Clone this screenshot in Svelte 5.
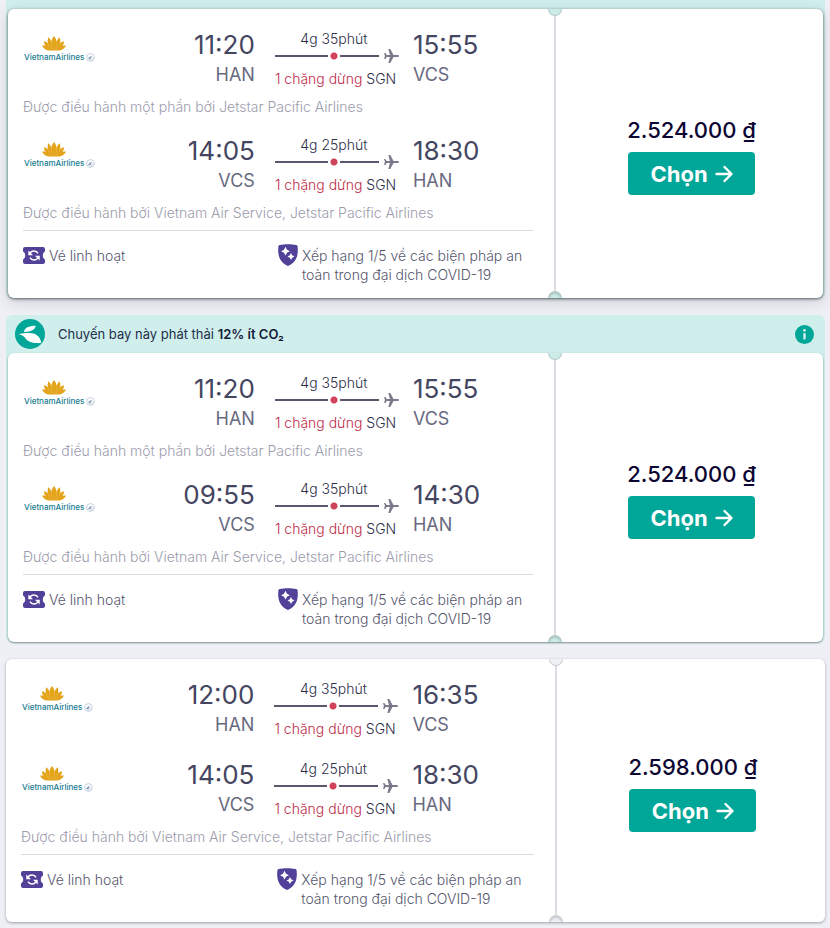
<script>
  const partly = 'Được điều hành một phần bởi Jetstar Pacific Airlines';
  const operated = 'Được điều hành bởi Vietnam Air Service, Jetstar Pacific Airlines';

  const tickets = [
    {
      id: 1,
      eco: 'strip',
      raised: true,
      price: '2.524.000 ₫',
      legs: [
        { depart: '11:20', from: 'HAN', arrive: '15:55', to: 'VCS', duration: '4g 35phút', note: partly },
        { depart: '14:05', from: 'VCS', arrive: '18:30', to: 'HAN', duration: '4g 25phút', note: operated }
      ]
    },
    {
      id: 2,
      eco: 'banner',
      raised: false,
      price: '2.524.000 ₫',
      legs: [
        { depart: '11:20', from: 'HAN', arrive: '15:55', to: 'VCS', duration: '4g 35phút', note: partly },
        { depart: '09:55', from: 'VCS', arrive: '14:30', to: 'HAN', duration: '4g 35phút', note: operated }
      ]
    },
    {
      id: 3,
      eco: '',
      raised: false,
      price: '2.598.000 ₫',
      legs: [
        { depart: '12:00', from: 'HAN', arrive: '16:35', to: 'VCS', duration: '4g 35phút', note: '' },
        { depart: '14:05', from: 'VCS', arrive: '18:30', to: 'HAN', duration: '4g 25phút', note: operated }
      ]
    }
  ];
</script>

{#snippet airlineLogo()}
  <div class="logo">
    <svg class="lotus" viewBox="0 0 24 15" aria-hidden="true">
      <path fill="#e3a41c" d="M12 0c1.600 2 2.500 4 2.600 6 .6-2 1.500-3.700 3-4.700.8 2 .9 3.900.5 5.900 1.200-1.100 2.400-1.700 4-2-.2 2-.7 3.500-1.800 4.900 1.200-.5 2.400-.6 3.700-.4-1.600 3-4.300 4.700-7.500 4.800h-9C4.300 14.400 1.600 12.700 0 9.700c1.300-.2 2.500-.1 3.700.4C2.600 8.700 2.100 7.200 1.900 5.200c1.600.3 2.800.9 4 2-.4-2-.3-3.900.5-5.900 1.500 1 2.400 2.700 3 4.700C9.500 4 10.400 2 12 0z"/>
      <path fill="none" stroke="#f0c562" stroke-width=".4" d="M9.400 13.500C7.600 11.500 6.500 9.500 5.900 7.200M14.600 13.500c1.800-2 2.900-4 3.500-6.300M10.800 13.500C9.700 11 9.300 8.500 9.400 6M13.200 13.500c1.100-2.500 1.500-5 1.400-7.500"/>
    </svg>
    <div class="wordmark">
      <span>VietnamAirlines</span>
      <svg class="team" viewBox="0 0 10 10" aria-hidden="true">
        <circle cx="5" cy="5" r="4.300" fill="none" stroke="#b3c0d3" stroke-width=".8"/>
        <path d="M2 6.500c1-.2 1.500-2.800 3.500-3 1-.1 2 .2 2.500.5-1.500 0-2 .6-2.300 1.500-.4 1.200-2 1.800-3.700 1z" fill="#8497b8"/>
        <path d="M4 8c2 0 3.500-1 4-3" fill="none" stroke="#9fb0c8" stroke-width=".7"/>
      </svg>
    </div>
  </div>
{/snippet}

<main>
  {#each tickets as t (t.id)}
    <article class="ticket" class:eco={t.eco !== ''} class:strip={t.eco === 'strip'} class:raised={t.raised}>
      {#if t.eco === 'banner'}
        <header class="banner">
          <svg class="leaf" viewBox="0 0 30 30" aria-hidden="true">
            <circle cx="15" cy="15" r="15" fill="#00a698"/>
            <path fill="#fff" d="M3.500 15.200c3-1 6.800-1.300 10.500-1.300 6.500 0 11.300 3.200 12.300 9.800-1 .4-2.600.6-4 .4-5.800-.1-10-1.500-12.400-5.500C8.600 16.800 6.500 15.800 3.500 15.200z"/>
            <path fill="#fff" d="M9 12.900c.5-4 4.500-6.200 11.700-6.200-.8 4.100-4.400 5.800-11.700 6.200z"/>
          </svg>
          <p>Chuyến bay này phát thải <strong>12% ít CO₂</strong></p>
          <button class="info" type="button" aria-label="Thông tin">
            <svg viewBox="0 0 20 20" aria-hidden="true">
              <circle cx="10" cy="10" r="10" fill="#00a698"/>
              <circle cx="10" cy="5.600" r="1.500" fill="#d0eeec"/>
              <rect x="8.700" y="8.300" width="2.600" height="7" rx="1" fill="#d0eeec"/>
            </svg>
          </button>
        </header>
      {/if}
      <div class="card">
        <section class="details">
          <div class="legs">
            {#each t.legs as leg}
              <div class="leg">
                <div class="flight">
                  {@render airlineLogo()}
                  <div class="stop depart">
                    <span class="time">{leg.depart}</span>
                    <span class="code">{leg.from}</span>
                  </div>
                  <div class="route">
                    <span class="duration">{leg.duration}</span>
                    <div class="track">
                      <div class="line"><i class="dot"></i></div>
                      <svg viewBox="0 0 16 16" aria-hidden="true">
                        <path fill="#7b788c" d="M16 8c0 .6-.8 1-1.700 1h-3.800L7.300 15H5.400L6.900 9H3.700L2.400 10.900H1.100L1.900 8 1.100 5.100h1.300L3.700 7h3.200L5.400 1h1.900l3.200 6h3.800c.9 0 1.700.4 1.700 1z"/>
                      </svg>
                    </div>
                    <span class="via"><span class="count">1 chặng dừng</span> SGN</span>
                  </div>
                  <div class="stop arrive">
                    <span class="time">{leg.arrive}</span>
                    <span class="code">{leg.to}</span>
                  </div>
                </div>
                {#if leg.note}<p class="note">{leg.note}</p>{/if}
              </div>
            {/each}
          </div>
          <div class="perks">
            <div class="perk">
              <svg class="flex-icon" viewBox="0 0 22 17" aria-hidden="true">
                <path fill="#524199" d="M2 0h18a2 2 0 0 1 2 2v2.500c-1.600.8-2.200 2.300-2.200 4s.6 3.200 2.200 4V15a2 2 0 0 1-2 2H2a2 2 0 0 1-2-2v-2.500c1.600-.8 2.200-2.300 2.200-4S1.600 5.300 0 4.500V2a2 2 0 0 1 2-2z"/>
                <path fill="none" stroke="#fff" stroke-width="1.500" d="M6.500 7.600C7.200 5.200 9 4 11 4c1.700 0 3.200.8 4 2.300M15.500 9.400C14.800 11.800 13 13 11 13c-1.700 0-3.200-.8-4-2.300"/>
                <path fill="#fff" d="M5.300 3.500v4.700H10zM16.700 13.500V8.800H12z"/>
              </svg>
              <span>Vé linh hoạt</span>
            </div>
            <div class="perk">
              <svg class="shield-icon" viewBox="0 0 20 22" aria-hidden="true">
                <path fill="#524199" d="M1.600 1.100C6.500-.2 13.500-.2 18.400 1.100c.8.200 1.100.7 1.200 1.400C20.600 11 18.500 18.500 10 22 1.500 18.500-.6 11 .4 2.500.5 1.800.8 1.300 1.600 1.100z"/>
                <path fill="#fff" d="M7.500 2.800l1.500 2.900 2.900 1.500L9 8.700l-1.500 2.900L6 8.700 3.100 7.200 6 5.700zM13 9l1.200 2.300 2.300 1.200-2.300 1.200L13 16l-1.200-2.300-2.300-1.200 2.300-1.200z"/>
              </svg>
              <span>Xếp hạng 1/5 về các biện pháp an toàn trong đại dịch COVID-19</span>
            </div>
          </div>
        </section>
        <section class="offer">
          <i class="notch top"></i>
          <i class="notch bottom"></i>
          <span class="price">{t.price}</span>
          <button class="select" type="button">
            Chọn
            <svg viewBox="0 0 18 18" aria-hidden="true">
              <path fill="none" stroke="#fff" stroke-width="2.400" stroke-linecap="round" stroke-linejoin="round" d="M1.500 9h14.500M9.500 2l7 7-7 7"/>
            </svg>
          </button>
        </section>
      </div>
    </article>
  {/each}
</main>

<style>
  :global(body) {
    margin: 0;
    background: #eff0f5;
  }

  main {
    display: flex;
    flex-direction: column;
    gap: 17px;
    padding: 0 5px 6px 6px;
    font-family: Inter, 'Liberation Sans', sans-serif;
    font-size: 14px;
    font-weight: 300;
    line-height: 19px;
    color: #55566c;
  }

  p {
    margin: 0;
  }

  svg {
    display: block;
    flex: none;
  }

  .ticket {
    --notch: #eff0f5;
    border-radius: 6px;
  }

  .ticket.eco {
    --notch: #cdebe7;
    padding: 0 2px;
    background: #d0eeec;
  }

  .ticket.strip {
    padding-top: 9px;
    border-radius: 0 0 6px 6px;
  }

  .banner {
    display: flex;
    align-items: center;
    height: 38px;
    padding: 0 9px 0 7px;
    font-size: 13px;
    font-weight: 400;
    color: #22304a;
  }

  .leaf {
    width: 30px;
    height: 30px;
    margin-right: 13px;
  }

  .banner p {
    flex: 1;
  }

  .banner strong {
    font-weight: 600;
    color: #14203a;
  }

  .info {
    padding: 0;
    border: 0;
    background: none;
    cursor: pointer;
  }

  .info svg {
    width: 19px;
    height: 19px;
  }

  .card {
    display: grid;
    grid-template-columns: 67fr 33fr;
    border-radius: 6px;
    background: #fff;
    box-shadow: 0 1px 3px rgba(37, 32, 60, 0.4);
  }

  .eco .card {
    box-shadow: 0 1px 2px rgba(20, 60, 60, 0.55);
  }

  .raised .card {
    box-shadow: 0 1px 3px rgba(20, 40, 40, 0.7), 0 4px 14px rgba(37, 32, 60, 0.16);
  }

  .details {
    padding: 20px 21px 14px 15px;
  }

  .legs {
    display: flex;
    flex-direction: column;
    gap: 20px;
    padding-bottom: 9px;
    border-bottom: 1px solid #d9d9df;
  }

  .flight {
    display: grid;
    grid-template-columns: 73px 4fr 124px 3fr;
  }

  .logo {
    display: flex;
    flex-direction: column;
    gap: 1px;
    padding: 7px 0 0 1px;
  }

  .lotus {
    width: 24px;
    height: 15px;
    margin-left: 18px;
  }

  .wordmark {
    display: flex;
    align-items: center;
    gap: 2px;
    font-size: 8px;
    line-height: 10px;
    font-weight: 500;
    color: #177c92;
  }

  .team {
    width: 9px;
    height: 9px;
  }

  .stop {
    display: flex;
    flex-direction: column;
    font-weight: 400;
  }

  .depart {
    align-items: flex-end;
    padding-right: 20px;
  }

  .arrive {
    padding-left: 14px;
  }

  .time {
    font-size: 26px;
    line-height: 32px;
    color: #444560;
  }

  .code {
    font-size: 18px;
    line-height: 28px;
    color: #68697f;
  }

  .route {
    display: flex;
    flex-direction: column;
    padding-top: 2px;
    color: #2e2f48;
    line-height: 16px;
    white-space: nowrap;
  }

  .duration,
  .via {
    margin-right: 6px;
    text-align: center;
  }

  .track {
    display: flex;
    align-items: center;
    gap: 4px;
    padding: 1px 0 7px;
  }

  .track svg {
    width: 16px;
    height: 16px;
  }

  .line {
    display: flex;
    flex: 1;
    align-items: center;
    justify-content: center;
    height: 2px;
    padding-left: 14px;
    background: #5a566e;
  }

  .dot {
    width: 8px;
    height: 8px;
    border: solid #fff;
    border-width: 0 2px;
    background: radial-gradient(circle, #d1435b 3px, #fff 4px);
  }

  .count {
    color: #c02a48;
  }

  .note {
    margin-top: 10px;
    line-height: 16px;
    color: #9c9cad;
  }

  .perks {
    display: grid;
    grid-template-columns: 1fr 1fr;
    padding-top: 15px;
  }

  .perk {
    display: flex;
    align-items: flex-start;
    gap: 4px;
  }

  .flex-icon {
    width: 22px;
    height: 17px;
    margin-top: 1px;
  }

  .shield-icon {
    width: 20px;
    height: 22px;
    margin-top: -2px;
  }

  .offer {
    position: relative;
    display: flex;
    flex-direction: column;
    align-items: center;
    justify-content: center;
    gap: 8px;
    padding: 4px 0 0 4px;
    border-left: 2px solid #dcdce2;
    border-radius: 0 6px 6px 0;
  }

  .notch {
    position: absolute;
    left: -8px;
    box-sizing: border-box;
    width: 14px;
    height: 7px;
    border: 1px solid rgba(60, 80, 90, 0.2);
    background: var(--notch);
  }

  .notch.top {
    top: 0;
    border-top: 0;
    border-radius: 0 0 7px 7px;
  }

  .notch.bottom {
    bottom: 0;
    border-bottom: 0;
    border-radius: 7px 7px 0 0;
    box-shadow: inset 0 2px 2px rgba(40, 60, 60, 0.2);
  }

  .price {
    font-size: 22px;
    line-height: 28px;
    font-weight: 500;
    color: #0c0633;
  }

  .select {
    display: flex;
    align-items: center;
    justify-content: center;
    gap: 7px;
    width: 127px;
    height: 43px;
    padding: 0;
    border: 0;
    border-radius: 4px;
    background: #00a698;
    color: #fff;
    font: 700 22px/28px Inter, 'Liberation Sans', sans-serif;
    cursor: pointer;
  }

  .select svg {
    width: 18px;
    height: 18px;
  }
</style>
